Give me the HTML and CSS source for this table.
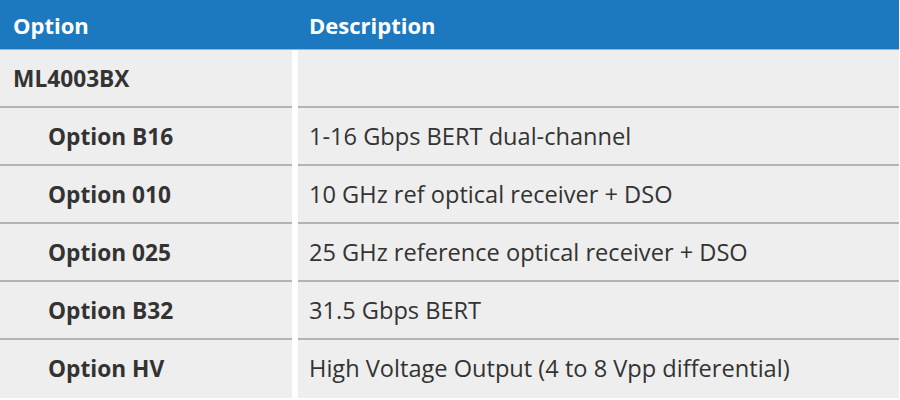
FILE: index.html
```html
<!DOCTYPE html>
<html>
<head>
<meta charset="utf-8">
<link rel="stylesheet" href="styles.css">
</head>
<body>
<div class="table">
  <div class="head">
    <div class="hcell c1">Option</div>
    <div class="hcell c2">Description</div>
  </div>
  <div class="body">
    <div class="cell opt top">ML4003BX</div>
    <div class="cell desc"></div>
    <div class="cell opt sub">Option B16</div>
    <div class="cell desc">1-16 Gbps BERT dual-channel</div>
    <div class="cell opt sub">Option 010</div>
    <div class="cell desc">10 GHz ref optical receiver + DSO</div>
    <div class="cell opt sub">Option 025</div>
    <div class="cell desc">25 GHz reference optical receiver + DSO</div>
    <div class="cell opt sub">Option B32</div>
    <div class="cell desc">31.5 Gbps BERT</div>
    <div class="cell opt sub last">Option HV</div>
    <div class="cell desc last">High Voltage Output (4 to 8 Vpp differential)</div>
  </div>
</div>
</body>
</html>
```
FILE: styles.css
```css
html, body {
  margin: 0;
  padding: 0;
  background: #ffffff;
}
body {
  font-family: "Open Sans", "Noto Sans", sans-serif;
  font-size: 23.6px;
  color: #333333;
}
.table {
  width: 899px;
}
.head {
  display: grid;
  grid-template-columns: 298px 1fr;
  height: 49px;
  background: #1c79c0;
  border-bottom: 1px solid #9fb3c4;
  align-items: center;
}
.hcell {
  color: #ffffff;
  font-weight: 700;
  font-size: 22px;
}
.hcell.c1 { padding-left: 13px; }
.hcell.c2 { padding-left: 11px; }
.body {
  display: grid;
  grid-template-columns: 292px 1fr;
  column-gap: 6px;
}
.cell {
  background: #eeeeee;
  height: 56px;
  border-bottom: 2px solid #b3b3b3;
  display: flex;
  align-items: center;
}
.cell.last {
  border-bottom: 2px solid #eeeeee;
}
.opt {
  font-weight: 700;
  font-size: 22.7px;
}
.opt.top { padding-left: 13px; }
.opt.sub { padding-left: 48px; }
.desc { padding-left: 11px; }
```
